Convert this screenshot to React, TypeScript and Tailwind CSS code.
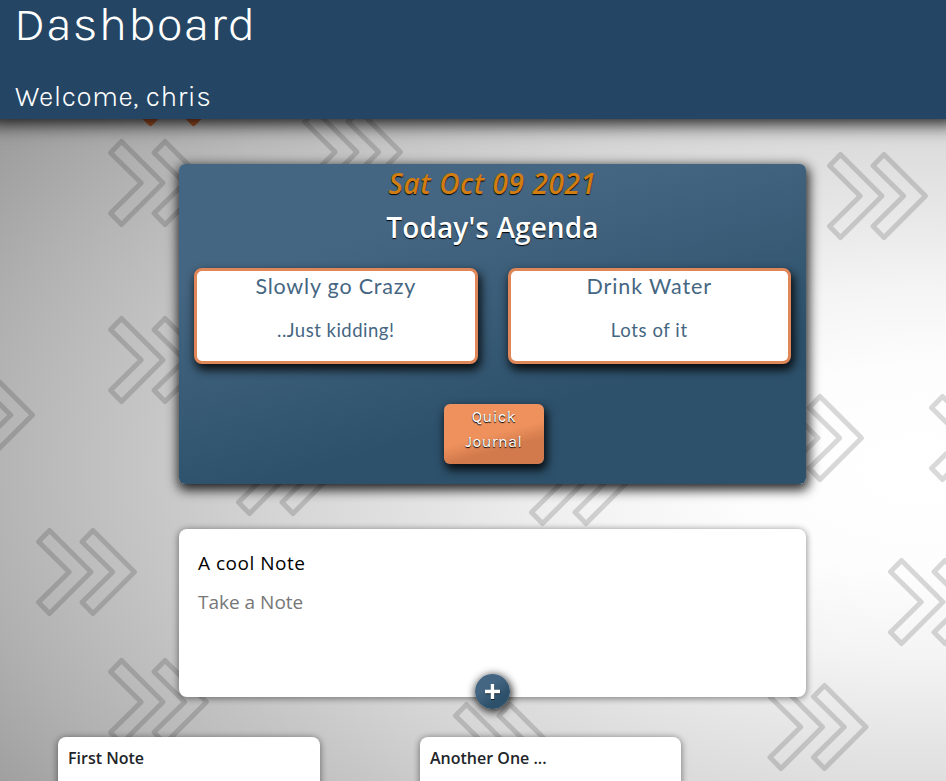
const marks = [
  [108, 139], [108, 316], [-66, 371], [36, 528], [108, 658],
  [302, 108], [236, 428], [529, 438], [453, 702], [763, 394],
  [929, 394], [888, 558], [767.5, 683], [827, 152],
];

const arrow = "M13.5 2.5 L2.5 13.7 L33.2 44 L2.5 74.3 L13.5 85.5 L55 44 Z";

function Backdrop() {
  return (
    <svg className="absolute inset-0 -z-10" width="946" height="781" fill="none" strokeLinejoin="round">
      {marks.map(([x, y]) => (
        <g key={`${x}-${y}`} transform={`translate(${x} ${y})`} stroke="#000" strokeOpacity="0.15" strokeWidth="5">
          <path d={arrow} />
          <path d={arrow} transform="translate(43.5 0)" />
        </g>
      ))}
      <g transform="translate(137 38)" fill="#b35a2b" stroke="#b35a2b" strokeWidth="5">
        <path d={arrow} />
        <path d={arrow} transform="translate(43 0)" />
      </g>
    </svg>
  );
}

function AgendaCard({ title, text, titleClass, textClass }: { title: string; text: string; titleClass: string; textClass: string }) {
  return (
    <article className="h-24 flex-1 rounded-lg border-[3px] border-[#e0875a] bg-white text-center font-['Lato',sans-serif] text-[#456682] shadow-[2px_5px_10px_1px_rgba(0,0,0,0.85)]">
      <h3 className={`whitespace-nowrap leading-[30px] ${titleClass}`}>{title}</h3>
      <p className={`mt-[15px] whitespace-nowrap leading-[28px] ${textClass}`}>{text}</p>
    </article>
  );
}

export default function App() {
  return (
    <div className="relative isolate h-[781px] w-[946px] overflow-hidden bg-[radial-gradient(1200px_686px_at_920px_470px,#fff_0%,#fdfdfd_15%,#f4f4f4_27%,#e8e8e8_37%,#dedede_46%,#d5d5d5_54%,#c8c8c8_63%,#bababa_73%,#b1b1b1_79%,#999_93%,#929292_100%)] font-['Open_Sans',sans-serif]">
      <Backdrop />
      <header className="h-[119px] bg-[#244664] pl-[15px] font-['Karla','Inter',sans-serif] font-light text-white shadow-[0_-10px_18px_14px_rgba(0,0,0,0.95)]">
        <h1 className="-ml-px h-[82px] whitespace-nowrap text-[48px] leading-[48px] font-light tracking-[0.9px]">Dashboard</h1>
        <p className="whitespace-nowrap text-[28px] leading-[29px] tracking-[0.5px]">Welcome, chris</p>
      </header>
      <main className="ml-[179px] w-[627px] pt-[45px]">
        <section className="flex h-80 flex-col items-center rounded-md bg-[linear-gradient(165deg,#456682_0%,#456682_25%,#2d516b_70%)] shadow-[1px_4px_12px_2px_rgba(0,0,0,0.85)]">
          <h2 className="h-10 whitespace-nowrap text-[28px] leading-[39px] font-semibold tracking-[0.6px] text-[#d27d12] italic [text-shadow:0_1px_1px_#000]">Sat Oct 09 2021</h2>
          <h2 className="mt-1 h-10 whitespace-nowrap text-[28px] leading-[39px] font-semibold tracking-[0.1px] text-white [text-shadow:0_1px_1px_#000]">Today's Agenda</h2>
          <div className="mt-5 flex w-full gap-[30px] px-[15px]">
            <AgendaCard title="Slowly go Crazy" text="..Just kidding!" titleClass="text-[21.5px] tracking-[0.8px]" textClass="text-[18.5px] tracking-[0.5px]" />
            <AgendaCard title="Drink Water" text="Lots of it" titleClass="text-[21.5px] tracking-[0.9px]" textClass="text-[18.5px] tracking-[0.6px]" />
          </div>
          <button className="mt-10 ml-[3px] h-[60px] w-[100px] rounded-md bg-[linear-gradient(165deg,#ee915d_0%,#ee915d_50%,#d27a4c_70%)] pb-[11px] font-['Karla','Inter',sans-serif] text-base leading-[25px] tracking-[0.5px] text-white shadow-[2px_5px_10px_1px_rgba(0,0,0,0.85)] [text-shadow:0_1px_1px_#000]">
            Quick<br />Journal
          </button>
        </section>
        <section className="relative mt-[45px] h-[168px] rounded-lg bg-white px-[19px] pt-[18px] text-[19px] shadow-[0_1px_6px_1px_rgba(0,0,0,0.4)]">
          <p className="h-[39px] whitespace-nowrap leading-8 tracking-[0.5px] text-black">A cool Note</p>
          <p className="whitespace-nowrap leading-8 text-[#777]">Take a Note</p>
          <button className="absolute top-[145px] left-[296px] grid size-[35px] place-items-center rounded-full bg-[linear-gradient(145deg,#456682_35%,#2d516b_70%)] shadow-[1px_2px_8px_1px_rgba(0,0,0,0.85)]">
            <svg width="17" height="17" viewBox="0 0 17 17" strokeWidth="3.4">
              <path d="M8.8 1.8V17M1.5 9.5H16.3" stroke="#13202b" />
              <path d="M8.5 1V16M1 8.5H16" stroke="#fff" />
            </svg>
          </button>
        </section>
      </main>
      <div className="mt-10 ml-[58px] flex gap-[100px] text-base leading-6 font-semibold text-[#212529]">
        <article className="h-24 w-[262px] rounded-lg bg-white px-2.5 pt-[9px] shadow-[0_1px_6px_1px_rgba(0,0,0,0.4)]">First Note</article>
        <article className="h-24 w-[261px] rounded-lg bg-white px-2.5 pt-[9px] shadow-[0_1px_6px_1px_rgba(0,0,0,0.4)]">Another One ...</article>
      </div>
    </div>
  );
}
